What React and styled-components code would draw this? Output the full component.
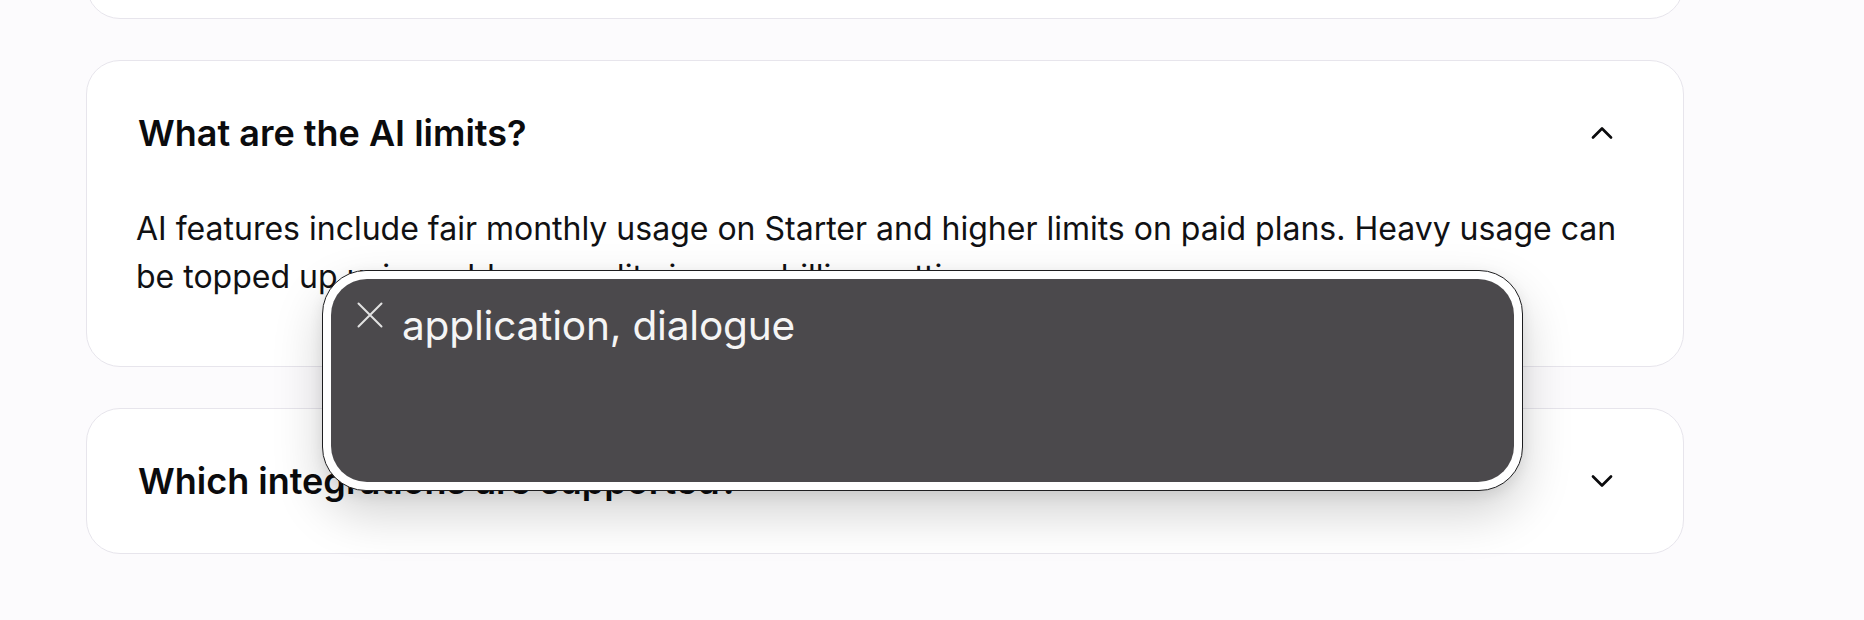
import React from "react";
import styled, { createGlobalStyle } from "styled-components";
import { ChevronUp, ChevronDown } from "lucide-react";

const GlobalStyle = createGlobalStyle`
  html, body {
    margin: 0;
    padding: 0;
    background: #fcfbfd;
  }
  body {
    font-family: Inter, "Noto Sans", sans-serif;
    color: #0b0b0d;
    overflow: hidden;
  }
`;

const Page = styled.div`
  position: relative;
  width: 1864px;
  height: 620px;
  overflow: hidden;
`;

/* FAQ list, scrolled so the first card is mostly above the fold */
const FaqList = styled.div`
  display: flex;
  flex-direction: column;
  gap: 41px;
  width: 1598px;
  margin: -127px 0 0 86px;
`;

const Card = styled.div`
  background: #ffffff;
  border: 1.5px solid #e7e5ec;
  border-radius: 34px;
`;

const Question = styled.div`
  display: flex;
  align-items: center;
  justify-content: space-between;
  padding: 50px 63px 50px 51px;
  font-size: 36px;
  font-weight: 600;
  line-height: 44px;

  svg {
    flex-shrink: 0;
    color: #0b0b0d;
  }
`;

const Answer = styled.p`
  margin: 0;
  padding: 0 40px 65px 49px;
  font-size: 32px;
  line-height: 48px;
  color: #111113;
`;

/* accessibility caption panel that floats over the page */
const Caption = styled.div`
  position: absolute;
  left: 322px;
  top: 270px;
  width: 1201px;
  height: 221px;
  box-sizing: border-box;
  display: flex;
  padding: 8px;
  background: #ffffff;
  border: 1.2px solid #1d1d1f;
  border-radius: 44px;
  box-shadow: 0 22px 50px rgba(0, 0, 0, 0.18), 0 4px 14px rgba(0, 0, 0, 0.08);
`;

const CaptionPanel = styled.div`
  flex: 1;
  display: flex;
  align-items: flex-start;
  gap: 19px;
  padding: 23px 26px;
  background: #4b494c;
  border-radius: 36px;
`;

const CloseIcon = styled.svg`
  width: 26px;
  height: 26px;
  flex-shrink: 0;
`;

const CaptionText = styled.span`
  font-family: Inter, "Noto Sans", sans-serif;
  font-size: 40.6px;
  line-height: 48px;
  font-weight: 400;
  color: #f5f5f5;
  letter-spacing: -0.2px;
`;

const faqs = [
  {
    q: "Can I change my plan later?",
    open: false,
  },
  {
    q: "What are the AI limits?",
    a: "AI features include fair monthly usage on Starter and higher limits on paid plans. Heavy usage can be topped up using add-on credits in your billing settings.",
    open: true,
  },
  {
    q: "Which integrations are supported?",
    open: false,
  },
];

export default function App() {
  return (
    <Page>
      <GlobalStyle />
      <FaqList>
        {faqs.map((item) => (
          <Card key={item.q}>
            <Question>
              <span>{item.q}</span>
              {item.open ? (
                <ChevronUp size={36} strokeWidth={1.8} />
              ) : (
                <ChevronDown size={36} strokeWidth={1.8} />
              )}
            </Question>
            {item.open && <Answer>{item.a}</Answer>}
          </Card>
        ))}
      </FaqList>

      <Caption role="dialog">
        <CaptionPanel>
          <CloseIcon viewBox="0 0 26 26" fill="none">
            <path d="M1.5 1.5 24.5 24.5M24.5 1.5 1.5 24.5" stroke="#e2e2e2" strokeWidth="2" strokeLinecap="round" />
          </CloseIcon>
          <CaptionText>application, dialogue</CaptionText>
        </CaptionPanel>
      </Caption>
    </Page>
  );
}
